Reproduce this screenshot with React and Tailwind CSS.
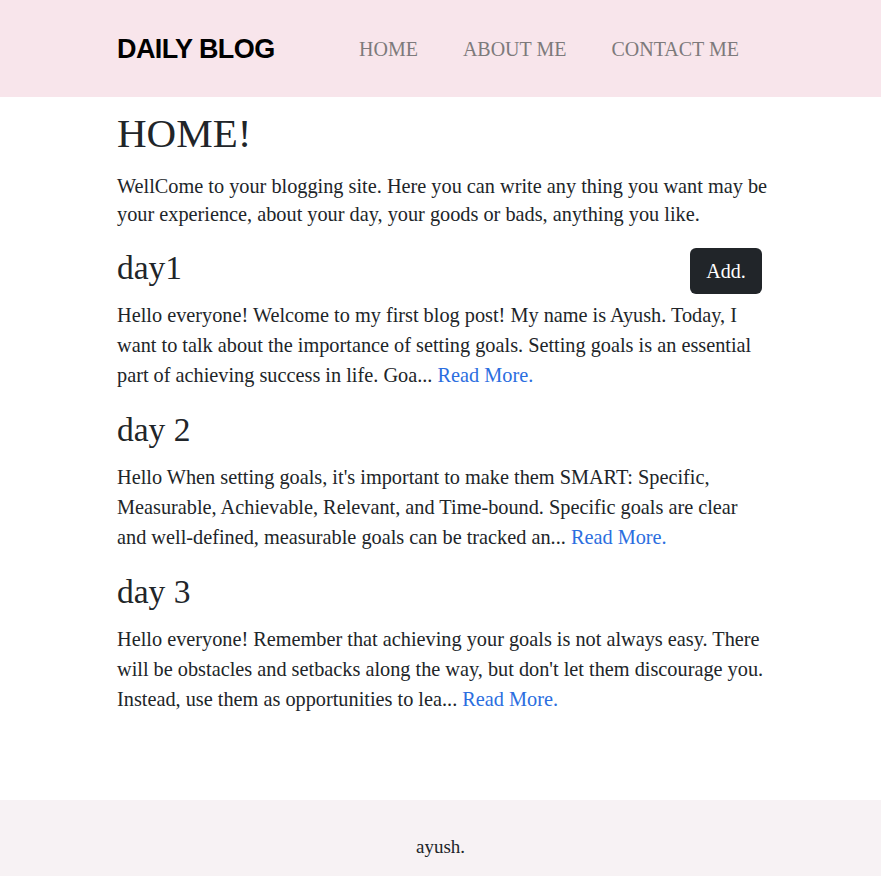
export default function App() {
  const posts = [
    {
      title: "day1",
      lines: [
        "Hello everyone! Welcome to my first blog post! My name is Ayush. Today, I",
        "want to talk about the importance of setting goals. Setting goals is an essential",
        "part of achieving success in life. Goa...",
      ],
    },
    {
      title: "day 2",
      lines: [
        "Hello When setting goals, it's important to make them SMART: Specific,",
        "Measurable, Achievable, Relevant, and Time-bound. Specific goals are clear",
        "and well-defined, measurable goals can be tracked an...",
      ],
    },
    {
      title: "day 3",
      lines: [
        "Hello everyone! Remember that achieving your goals is not always easy. There",
        "will be obstacles and setbacks along the way, but don't let them discourage you.",
        "Instead, use them as opportunities to lea...",
      ],
    },
  ];
  return (
    <div className="min-h-[876px] flex flex-col bg-white text-[#212529] font-['Liberation_Serif',serif]">
      <header className="h-[97px] bg-[#f8e5eb] flex items-center pl-[117px]">
        <div className="font-['Liberation_Sans',Arial,sans-serif] font-bold text-[27px] text-black tracking-[-0.6px] w-[242px] pt-[2px]">
          DAILY BLOG
        </div>
        <nav className="flex gap-[45px] text-[20px] text-[#7d7a7b]">
          <a>HOME</a>
          <a>ABOUT ME</a>
          <a>CONTACT ME</a>
        </nav>
      </header>
      <main className="ml-[117px] w-[680px] flex-1 pt-[12px]">
        <h1 className="text-[41px] leading-[48px]">HOME!</h1>
        <p className="text-[20.3px] leading-[28px] mt-[15px]">
          WellCome to your blogging site. Here you can write any thing you want may be
          <br />
          your experience, about your day, your goods or bads, anything you like.
        </p>
        {posts.map((p, i) => (
          <section key={i} className="mt-[20px]">
            <div className="flex items-start justify-between w-[645px]">
              <h2 className="text-[33.5px] leading-[40px]">{p.title}</h2>
              {i === 0 && (
                <button className="bg-[#212529] text-white text-[20px] w-[72px] h-[46px] rounded-[6px]">
                  Add.
                </button>
              )}
            </div>
            <p className={`text-[20.3px] leading-[30px] ${i === 0 ? "mt-[6px]" : "mt-[12px]"}`}>
              {p.lines[0]}
              <br />
              {p.lines[1]}
              <br />
              {p.lines[2]} <a className="text-[#2b6ee0]">Read More.</a>
            </p>
          </section>
        ))}
      </main>
      <footer className="h-[76px] bg-[#f7f2f4] flex justify-center pt-[32px] text-[19px] leading-[30px]">
        ayush.
      </footer>
    </div>
  );
}
